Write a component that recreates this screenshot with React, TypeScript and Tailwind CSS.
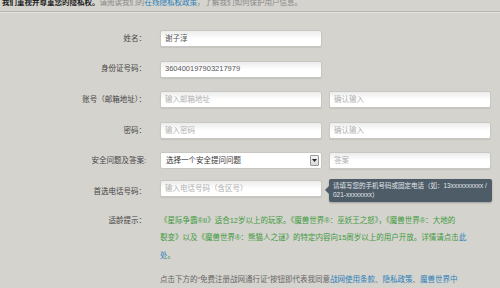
import React from 'react';

const font = { fontFamily: '"Liberation Sans", "Noto Sans CJK SC", sans-serif' };

const Field: React.FC<{ value?: string; placeholder?: string }> = ({ value, placeholder }) => (
  <div className="flex h-[17px] w-[162px] items-center rounded-[2px] border border-[#c9c7c2] bg-gradient-to-b from-[#ececec] via-white to-white px-[4px] shadow-[0_1px_1px_rgba(0,0,0,0.08)]">
    <span className={`text-[7.5px] leading-none ${value ? 'text-[#555]' : 'text-[#b0b0b0]'}`}>{value || placeholder}</span>
  </div>
);

const Row: React.FC<{ label: string; children: React.ReactNode }> = ({ label, children }) => (
  <div className="flex h-[17px] items-center">
    <div className="w-[147px] pr-[1px] text-right text-[7.5px] leading-none text-[#444]">{label}</div>
    <div className="ml-[13px] flex gap-[7px]">{children}</div>
  </div>
);

export default function App() {
  return (
    <div className="h-[288px] w-[500px] overflow-hidden bg-[#d5d3ce]" style={font}>
      <div className="-mt-[2px] border-b border-[#b9b7b2] pb-[3px] pl-[2px] text-[7.5px] leading-[10px] shadow-[0_1px_0_#e4e2de]">
        <span className="font-bold text-[#222]">我们重视并尊重您的隐私权。</span>
        <span className="text-[#888]">请阅读我们的</span>
        <span className="text-[#2a7fb8]">在线隐私权政策</span>
        <span className="text-[#888]">，了解我们如何保护用户信息。</span>
      </div>

      <div className="mt-[18px] flex flex-col gap-[13.6px]">
        <Row label="姓名：">
          <Field value="谢子淳" />
        </Row>
        <Row label="身份证号码：">
          <Field value="360400197903217979" />
        </Row>
        <Row label="账号（邮箱地址）：">
          <Field placeholder="输入邮箱地址" />
          <Field placeholder="确认输入" />
        </Row>
        <Row label="密码：">
          <Field placeholder="输入密码" />
          <Field placeholder="确认输入" />
        </Row>
        <Row label="安全问题及答案:">
          <div className="flex h-[17px] w-[162px] items-center justify-between rounded-[2px] border border-[#c9c7c2] bg-white pl-[5px] pr-[2px]">
            <span className="text-[7.5px] leading-none text-[#333]">选择一个安全提问问题</span>
            <div className="flex h-[11px] w-[9px] items-center justify-center rounded-[1px] border border-[#999] bg-gradient-to-b from-[#f4f4f4] to-[#d8d8d8]">
              <svg width="5" height="3" viewBox="0 0 5 3"><path d="M0 0h5L2.5 3z" fill="#222" /></svg>
            </div>
          </div>
          <Field placeholder="答案" />
        </Row>
        <Row label="首选电话号码：">
          <Field placeholder="输入电话号码（含区号）" />
          <div className="relative -mt-[1px] self-start">
            <div className="absolute left-[-4px] top-[7px] h-0 w-0 border-y-[4px] border-r-[4px] border-y-transparent border-r-[#4e5c68]" />
            <div className="h-[23px] w-[163px] whitespace-nowrap rounded-[2px] bg-[#4e5c68] px-[4px] pt-[2px] text-[6.5px] leading-[9px] text-[#e2e6ea] shadow-[0_1px_2px_rgba(0,0,0,0.25)]">
              请填写您的手机号码或固定电话（如：13xxxxxxxxxx /<br />021-xxxxxxxx）
            </div>
          </div>
        </Row>
      </div>

      <div className="mt-[16px] flex">
        <div className="w-[147px] pr-[1px] pt-[1px] text-right text-[7.5px] leading-[8px] text-[#444]">适龄提示：</div>
        <div className="ml-[13px] w-[320px]">
          <p className="-mt-[4px] whitespace-nowrap text-[7.5px] leading-[17.5px] text-[#3d9a3d]">
            《星际争霸®II》适合12岁以上的玩家。《魔兽世界®：巫妖王之怒》，《魔兽世界®：大地的
            <br />
            裂变》以及《魔兽世界®：熊猫人之谜》的特定内容向15周岁以上的用户开放。详情请点击<span className="text-[#2a7fb8]">此</span>
            <br />
            <span className="text-[#2a7fb8]">处</span>。
          </p>
          <p className="mt-[7px] whitespace-nowrap text-[7.5px] leading-[17.5px] text-[#666]">
            点击下方的“免费注册战网通行证”按钮即代表我同意<span className="text-[#2a7fb8]">战网使用条款</span>、<span className="text-[#2a7fb8]">隐私政策</span>、<span className="text-[#2a7fb8]">魔兽世界中</span>
          </p>
        </div>
      </div>
    </div>
  );
}
